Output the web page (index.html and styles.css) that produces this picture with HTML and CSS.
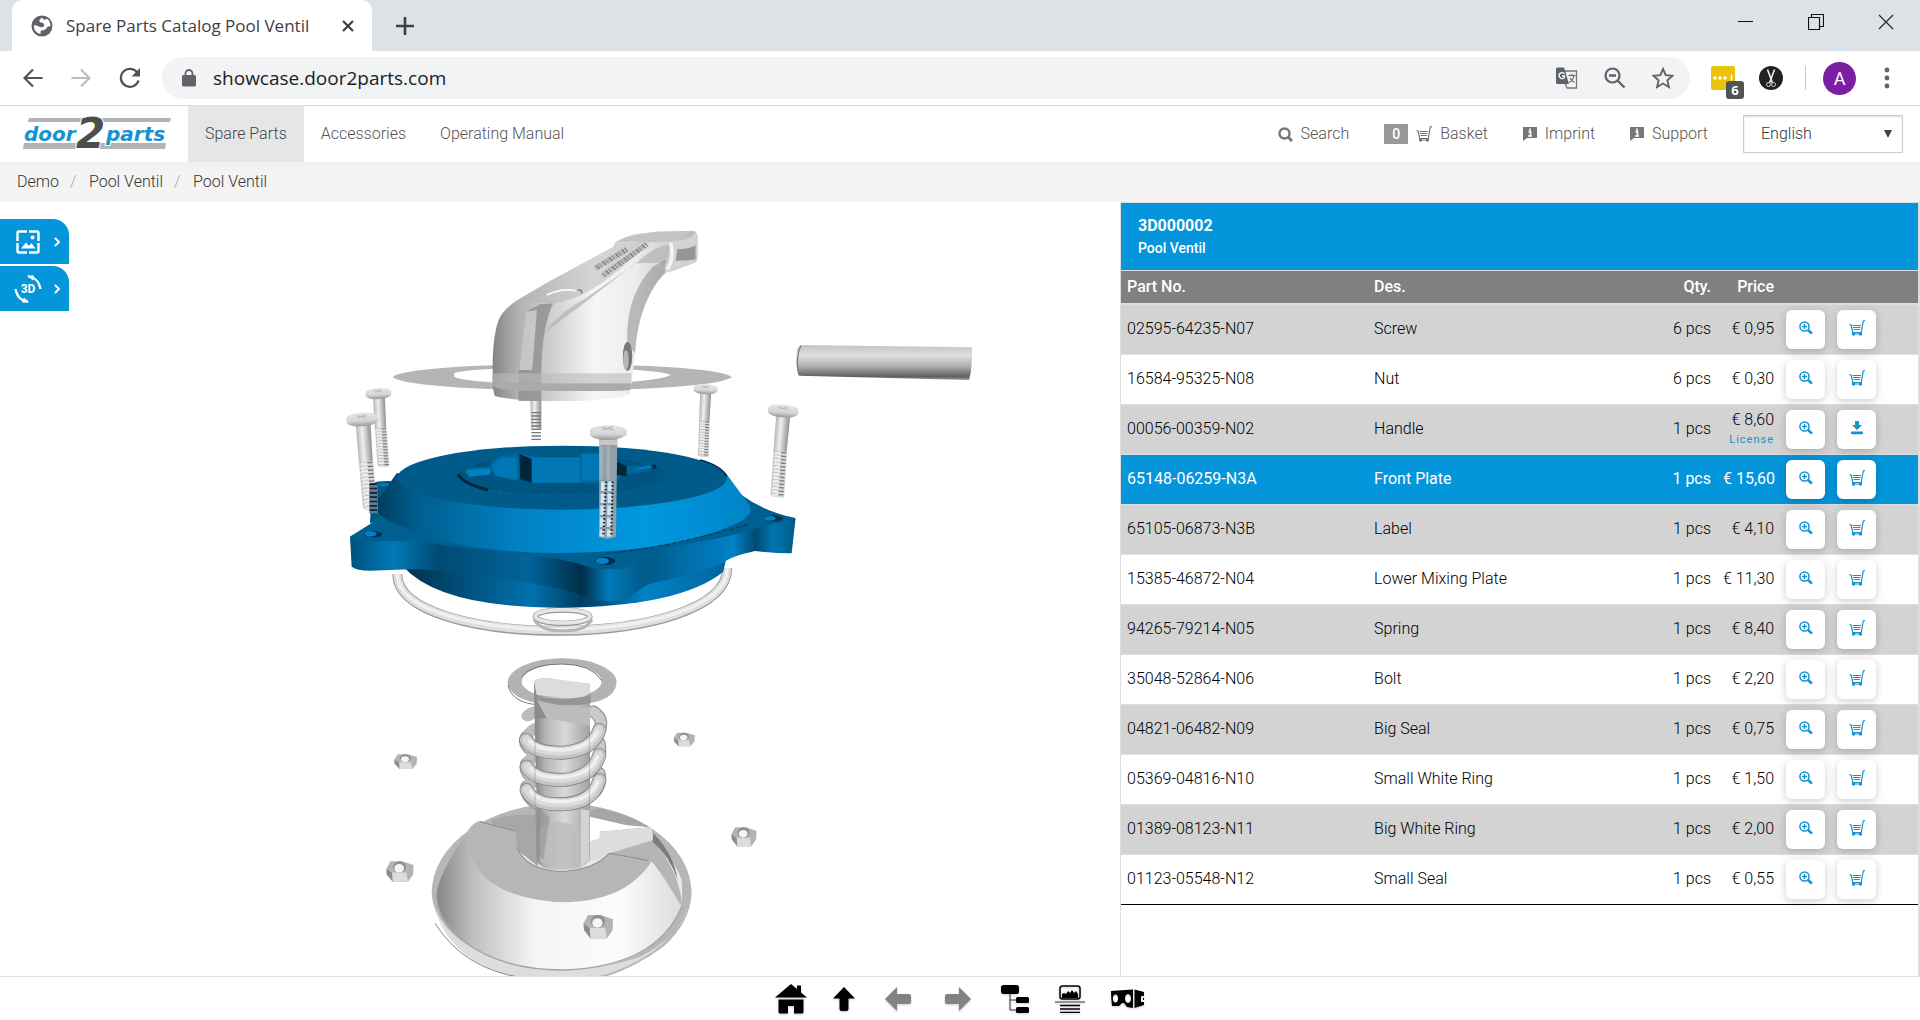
FILE: index.html
```html
<!DOCTYPE html>
<html lang="en">
<head>
<meta charset="utf-8">
<title>Spare Parts Catalog Pool Ventil</title>
<link rel="stylesheet" href="styles.css">
</head>
<body>
<svg width="0" height="0" class="defs" aria-hidden="true">
  <symbol id="i-zoom" viewBox="0 0 14 14"><circle cx="5.500" cy="5.500" r="4.600" fill="none" stroke="currentColor" stroke-width="1.500"/><path d="M3 5.500h5M5.500 3v5" stroke="currentColor" stroke-width="1.300"/><path d="M9 9l4 3.600" stroke="currentColor" stroke-width="2.600"/></symbol>
  <symbol id="i-cart" viewBox="0 0 16 16"><path d="M.5 4.500L2 5l1.800 7.500h8.400L14.300 1l1.700-.5" fill="none" stroke="currentColor" stroke-width="1.200"/><path d="M3.500 5.500h8.500M4 7.500h7.500M4.500 9.500h6.500" stroke="currentColor" stroke-width="1.100"/><circle cx="4.500" cy="14" r="1.700" fill="currentColor"/><circle cx="11.500" cy="14" r="1.700" fill="currentColor"/><path d="M4.500 14h7" stroke="currentColor"/></symbol>
  <symbol id="i-down" viewBox="0 0 14 14"><path d="M5 0h4v4h3L7 9 2 4h3z" fill="currentColor"/><rect x="1" y="10.500" width="12" height="2.800" rx="1" fill="currentColor"/></symbol>
  <symbol id="i-info" viewBox="0 0 14 14"><path d="M0 0h14v11H4L0 14z" fill="currentColor"/><path d="M7 1.500v2M5.500 4.700h2V9M5 9h4" stroke="#fff" stroke-width="1.700" fill="none"/></symbol>
</svg>

<header class="browser">
  <div class="tabstrip">
    <div class="tab">
      <svg class="favicon" viewBox="0 0 22 22"><circle cx="11" cy="11" r="10.500" fill="#5f6368"/><path d="M11.500 2.500c-2 1-3.500 2-3 4 .5 1.500 3.500.8 4.500 2.500.8 1.800-.6 3.500-3 3.300-2-.3-5-2.800-7-1.800-.8 4 2.800 7.800 6.500 8.500.4-1.500-.6-3 1-3.600 1.800-.3 4-.4 5-2.200.8-1.600 2.300-2 4-1.800 0-3-1-5.800-3-7.400-1.600 0-2.500.8-4 .2-.8-.5-1.200-1-1-1.700z" fill="#fff"/></svg>
      <span class="tab-title">Spare Parts Catalog Pool Ventil</span>
      <button class="plain" aria-label="Close tab"><svg width="12" height="12" viewBox="0 0 12 12"><path d="M1 1l10 10M11 1L1 11" stroke="#3c4043" stroke-width="2.200"/></svg></button>
    </div>
    <button class="plain newtab" aria-label="New tab"><svg width="18" height="18" viewBox="0 0 18 18"><path d="M9 0v18M0 9h18" stroke="#3c4043" stroke-width="2.600"/></svg></button>
    <div class="winctl">
      <button class="plain" aria-label="Minimize"><svg width="16" height="16" viewBox="0 0 16 16"><path d="M0 7.500h15" stroke="#111"/></svg></button>
      <button class="plain" aria-label="Restore"><svg width="16" height="16" viewBox="0 0 16 16"><path d="M.5 3.500h11v12H.5zM3.500 3.500V.5h12v12h-4" fill="none" stroke="#111" stroke-width="1.200"/></svg></button>
      <button class="plain" aria-label="Close"><svg width="16" height="16" viewBox="0 0 16 16"><path d="M1 1l14 14M15 1L1 15" stroke="#222" stroke-width="1.100"/></svg></button>
    </div>
  </div>
  <div class="toolbar">
    <button class="plain" aria-label="Back"><svg width="20" height="20" viewBox="0 0 20 20"><path d="M19.500 10H2M10 1.500L1.500 10l8.500 8.500" fill="none" stroke="#505357" stroke-width="2.200"/></svg></button>
    <button class="plain" aria-label="Forward"><svg width="20" height="20" viewBox="0 0 20 20"><path d="M.5 10H18M10 1.500l8.500 8.500-8.500 8.500" fill="none" stroke="#bbbcbf" stroke-width="2.200"/></svg></button>
    <button class="plain" aria-label="Reload"><svg width="22" height="22" viewBox="0 0 22 22"><path d="M18.500 6A9 9 0 1 0 19.500 13.500" fill="none" stroke="#505357" stroke-width="2.300"/><path d="M21 1v8.500h-8.500z" fill="#505357"/></svg></button>
    <div class="omnibox">
      <svg width="14" height="18" viewBox="0 0 14 18"><rect x="0" y="6" width="14" height="11.500" rx="1.500" fill="#5f6368"/><path d="M3.500 7V4.500a3.500 3.500 0 0 1 7 0V7" fill="none" stroke="#5f6368" stroke-width="1.800"/></svg>
      <input class="url" aria-label="Address" value="showcase.door2parts.com">
      <svg width="22" height="22" viewBox="0 0 22 22"><path d="M9 4h11.500v17H11L9 16z" fill="none" stroke="#777" stroke-width="1.300"/><path d="M0 2q0-1.500 1.500-1.500H8L13 17H1.500Q0 17 0 15.500z" fill="#5f6368"/><path d="M8.500 6.800a3 3 0 1 0 0 3.600V9H6" fill="none" stroke="#fff" stroke-width="1.400"/><path d="M12.500 8.500h7M16 7v1.500M18 8.500c-.5 3-2.500 5.500-5 7M14 11c1 2 2.500 3.500 4.500 4.500" fill="none" stroke="#777" stroke-width="1.300"/></svg>
      <svg width="22" height="22" viewBox="0 0 22 22"><circle cx="8.500" cy="8.500" r="7" fill="none" stroke="#5f6368" stroke-width="2.200"/><path d="M5 8.500h7M13.500 13.500l7 7" stroke="#5f6368" stroke-width="2.400"/></svg>
      <svg width="22" height="22" viewBox="0 0 22 22"><path d="M11 2l2.700 6.200 6.800.6-5.100 4.500 1.500 6.700-5.900-3.500L5.100 20l1.500-6.700-5.100-4.500 6.800-.6z" fill="none" stroke="#5f6368" stroke-width="1.900"/></svg>
    </div>
    <div class="extensions">
      <div class="ext"><svg width="26" height="25" viewBox="0 0 26 25"><rect width="24" height="24" rx="2" fill="#ecc30b"/><path d="M4 12h14" stroke="#fff" stroke-width="3.400" stroke-dasharray="0 5" stroke-linecap="round"/><path d="M20.500 8.500v6" stroke="#fff" stroke-width="1.600"/></svg><span class="ext-badge">6</span></div>
      <svg width="24" height="24" viewBox="0 0 24 24"><circle cx="12" cy="12" r="12" fill="#202124"/><path d="M8.500 3.500L13.500 17M15.500 3.500L10.500 17" stroke="#eee" stroke-width="1.600"/><circle cx="9.500" cy="18.500" r="2" fill="none" stroke="#ccc"/><circle cx="14.500" cy="18.500" r="2" fill="none" stroke="#ccc"/></svg>
      <span class="sep"></span>
      <span class="avatar">A</span>
      <button class="plain" aria-label="Menu"><svg width="6" height="22" viewBox="0 0 6 22"><circle cx="3" cy="3" r="2.400" fill="#5f6368"/><circle cx="3" cy="11" r="2.400" fill="#5f6368"/><circle cx="3" cy="19" r="2.400" fill="#5f6368"/></svg></button>
    </div>
  </div>
</header>

<nav class="nav">
  <a href="#" class="logo" aria-label="door2parts">
    <svg width="150" height="50" viewBox="0 -6 150 50">
      <path d="M6 2h142l-1 4H5zM1 27h142l-1 6H0z" fill="#b4b4b4"/>
      <text x="1" y="25" class="logo-word">door</text>
      <text x="83" y="25" class="logo-word">parts</text>
      <text x="53" y="32" class="logo-two">2</text>
    </svg>
  </a>
  <a href="#" class="nav-item active">Spare Parts</a>
  <a href="#" class="nav-item">Accessories</a>
  <a href="#" class="nav-item">Operating Manual</a>
  <div class="nav-right">
    <a href="#"><svg width="15" height="15" viewBox="0 0 15 15"><circle cx="6.500" cy="6.500" r="5" fill="none" stroke="#777" stroke-width="2.400"/><path d="M10 10l4 4" stroke="#777" stroke-width="2.800"/></svg>Search</a>
    <a href="#"><span class="count">0</span><svg width="16" height="16"><use href="#i-cart"/></svg>Basket</a>
    <a href="#"><svg width="14" height="14"><use href="#i-info"/></svg>Imprint</a>
    <a href="#"><svg width="14" height="14"><use href="#i-info"/></svg>Support</a>
    <div class="lang"><select aria-label="Language"><option>English</option></select><svg width="8" height="8" viewBox="0 0 8 8"><path d="M0 0h8L4 8z" fill="#444"/></svg></div>
  </div>
</nav>

<nav class="crumbs" aria-label="Breadcrumb">
  <a href="#">Demo</a><i>/</i><a href="#">Pool Ventil</a><i>/</i><a href="#">Pool Ventil</a>
</nav>

<main class="main">
  <section class="stage">
    <svg class="drawing" viewBox="0 202 1120 774" role="img" aria-label="Exploded view of the pool valve">
      <defs>
        <linearGradient id="gh"><stop offset="0" stop-color="#858585"/><stop offset=".12" stop-color="#b0b0b0"/><stop offset=".34" stop-color="#d9d9d9"/><stop offset=".5" stop-color="#f6f6f6"/><stop offset=".7" stop-color="#ececec"/><stop offset="1" stop-color="#b5b5b5"/></linearGradient>
        <linearGradient id="gpin" x2="0" y2="1"><stop offset="0" stop-color="#c4c4c4"/><stop offset=".3" stop-color="#dedede"/><stop offset=".6" stop-color="#b2b2b2"/><stop offset=".9" stop-color="#606060"/><stop offset="1" stop-color="#999"/></linearGradient>
        <linearGradient id="gs"><stop offset="0" stop-color="#b4b4b4"/><stop offset=".4" stop-color="#efefef"/><stop offset="1" stop-color="#8e8e8e"/></linearGradient>
        <linearGradient id="ghead" x2="0" y2="1"><stop offset="0" stop-color="#e6e6e6"/><stop offset=".6" stop-color="#d6d6d6"/><stop offset="1" stop-color="#999"/></linearGradient>
        <linearGradient id="gc"><stop offset="0" stop-color="#003d5e"/><stop offset=".12" stop-color="#005f92"/><stop offset=".4" stop-color="#0083c6"/><stop offset=".72" stop-color="#0098e0"/><stop offset="1" stop-color="#0084c8"/></linearGradient>
        <linearGradient id="gf"><stop offset="0" stop-color="#00527f"/><stop offset=".1" stop-color="#0079b6"/><stop offset=".2" stop-color="#004a73"/><stop offset=".4" stop-color="#00649a"/><stop offset=".52" stop-color="#002e48"/><stop offset=".58" stop-color="#007ab8"/><stop offset=".66" stop-color="#005a8a"/><stop offset=".86" stop-color="#0082c6"/><stop offset=".91" stop-color="#004a72"/><stop offset=".95" stop-color="#0075b2"/><stop offset="1" stop-color="#005a88"/></linearGradient>
        <linearGradient id="gb"><stop offset="0" stop-color="#00304c"/><stop offset=".4" stop-color="#0072ae"/><stop offset=".55" stop-color="#003e60"/><stop offset=".75" stop-color="#0082c6"/><stop offset="1" stop-color="#00669c"/></linearGradient>
        <linearGradient id="gd"><stop offset="0" stop-color="#858585"/><stop offset=".16" stop-color="#c2c2c2"/><stop offset=".4" stop-color="#f4f4f4"/><stop offset=".75" stop-color="#fcfcfc"/><stop offset="1" stop-color="#dcdcdc"/></linearGradient>
        <linearGradient id="gt"><stop offset="0" stop-color="#808080"/><stop offset=".2" stop-color="#b4b4b4"/><stop offset=".55" stop-color="#d9d9d9"/><stop offset="1" stop-color="#a2a2a2"/></linearGradient>
        <g id="screw">
          <path d="M-17 10h36l-1 98h-34z" fill="url(#gs)"/>
          <path d="M-16 106h35l3 118h-28l-8-6z" fill="#d6d6d6"/>
          <path d="M2 108l2 112" stroke="#6a6a6a" stroke-width="31" stroke-dasharray="3 6"/>
          <path d="M-4 108l2 112" stroke="#eee" stroke-width="17" stroke-dasharray="6 3"/>
          <path d="M-39-2q0-10 39-12 39 2 39 12v10q-8 8-25 11h-30q-18-3-23-11z" fill="url(#ghead)"/>
          <path d="M-14-7l24 5M10-8l-20 6" stroke="#bbb" stroke-width="3"/>
        </g>
        <g id="nut">
          <path d="M-34-4L-24-20H6L34-12 33 8 20 24H-18L-33 8z" fill="#b3b3b3"/>
          <path d="M-34-4L-20 4H16L20 24H-18L-33 8z" fill="#dcdcdc"/><path d="M-34-4L-20 4-18 24-33 8z" fill="#8b8b8b"/>
          <ellipse cx="-1" cy="-8" rx="16" ry="12" fill="#8e8e8e"/><ellipse cx="-2" cy="-5" rx="12" ry="9" fill="#f5f5f5"/>
        </g>
      </defs>

      <!-- handle, washer and pin -->
      <g transform="translate(380 210) scale(.3954 .3333)">
        <path fill-rule="evenodd" d="M32 501C80 450 840 450 890 501C840 554 80 554 32 501zM188 500C230 530 690 530 735 495C690 467 230 467 188 490z" fill="#b5b5b5"/>
        <path d="M380 560h28v100h-26z" fill="url(#gs)"/><path d="M395 606v90" stroke="#777" stroke-width="24" stroke-dasharray="4 6"/>
        <path d="M595 97Q615 80 640 72L700 65L795 63Q803 70 803 85V145Q802 155 795 158L740 183Q725 185 715 195Q680 240 660 320Q648 370 645 430L636 520L632 552Q600 568 500 573H400Q320 568 290 558L285 530V450Q287 370 300 330Q310 300 345 272L420 220L590 110z" fill="url(#gh)"/>
        <path d="M595 97Q620 75 700 65L795 63L735 93Q690 100 640 95z" fill="#c3c3c3"/>
        <path d="M590 110L595 97H680Q640 150 560 220Q500 270 440 280L345 272L420 220z" fill="#b4b4b4" opacity=".5"/>
        <path d="M415 370Q450 310 520 265L650 158Q690 110 735 103L725 160Q650 155 640 165Q570 230 510 285z" fill="#b8b8b8" opacity=".8"/>
        <path d="M735 95Q790 92 797 64L803 85V145L795 158L735 184L722 186Q742 150 735 95z" fill="#d3d3d3"/>
        <path d="M752 118q30 0 46-12v42q-10 4-50 4z" fill="#959595"/><path d="M735 98q10 45-8 80" stroke="#f4f4f4" stroke-width="9" fill="none"/>
        <path d="M720 190Q680 240 660 320Q648 370 645 430L625 400Q620 260 690 170L722 150z" fill="#858585" opacity=".5"/>
        <path d="M370 305L395 298L388 480H352z" fill="#c9c9c9" opacity=".8"/><path d="M370 305L405 283L438 280Q410 350 408 480V573H350V480H385L397 300z" fill="#8f8f8f" opacity=".8"/>
        <path d="M284 490H636L635 520H284z" fill="#bbb" opacity=".6"/><path d="M284 520H636L633 540Q600 545 408 542H350Q300 540 285 528z" fill="#aaa"/>
        <ellipse cx="626" cy="439" rx="12" ry="43" fill="#777"/><ellipse cx="622" cy="450" rx="7" ry="30" fill="#b7b7b7"/>
        <path d="M422 255q40-22 75-12" stroke="#fafafa" stroke-width="5" fill="none"/><path d="M500 240q12-2 10 10" stroke="#777" stroke-width="4" fill="none"/>
        <path d="M675 103L562 198M624 118L545 175" stroke="#666" stroke-width="15" stroke-dasharray="4 3 6 2 2 3" opacity=".65"/>
        <path d="M1064 405L1497 412Q1499 470 1490 510L1060 497Q1048 460 1055 415z" fill="url(#gpin)"/>
        <path d="M1064 407q-14 40-5 88" stroke="#777" stroke-width="3" fill="none"/>
      </g>

      <!-- front plate, screws and seals -->
      <g transform="translate(330 370) scale(.3333)">
        <path d="M202 612C200 842 1190 842 1192 595" stroke="#999" stroke-width="30" fill="none"/><path d="M202 612C200 840 1190 840 1192 595" stroke="#dedede" stroke-width="24" fill="none"/><path d="M202 612C200 836 1190 836 1192 595" stroke="#f0f0f0" stroke-width="10" fill="none"/>
        <g fill="none"><ellipse cx="698" cy="740" rx="82" ry="20" stroke="#999" stroke-width="16"/><ellipse cx="698" cy="739" rx="82" ry="20" stroke="#e6e6e6" stroke-width="11"/><path d="M612 748q20 36 86 34 70 2 88-34" stroke="#b4b4b4" stroke-width="9"/></g>
        <use href="#screw" transform="translate(145 68) rotate(-3)"/><use href="#screw" transform="translate(1127 55) scale(.92) rotate(3)"/>
        <path d="M125 340Q150 330 210 335L240 420L120 460z" fill="#005886"/><ellipse cx="162" cy="344" rx="17" ry="5" fill="#007bbb"/>
        <path d="M220 590Q330 712 690 713Q1050 710 1180 605L1190 560H215z" fill="url(#gb)"/>
        <path d="M60 500L125 460L200 370L1230 372Q1300 425 1397 445L1385 550Q1330 550 1275 543Q1200 560 1180 578Q1100 610 1000 632Q940 640 900 682Q850 700 780 688Q740 670 700 658Q560 630 450 618Q330 596 240 598L120 602Q80 602 65 590z" fill="url(#gf)"/>
        <path d="M60 500L125 460L200 370L1230 372Q1300 425 1397 445Q1330 465 1275 476Q1200 500 1100 517Q970 540 930 560Q900 592 870 597H815Q780 595 740 580Q660 558 500 545Q380 532 250 512Q150 514 80 512z" fill="#005f91"/>
        <path d="M200 310L140 395Q125 440 220 470Q400 550 690 549Q1060 545 1240 450Q1270 430 1258 405L1188 310z" fill="url(#gc)"/>
        <ellipse cx="697" cy="323" rx="495" ry="96" fill="#005b8b"/>
        <ellipse cx="697" cy="318" rx="310" ry="58" fill="#005580" stroke="#004d73" stroke-width="3"/>
        <path d="M385 310q20 64 312 66q290-4 310-65" fill="none" stroke="#006ca4" stroke-width="3" stroke-dasharray="12 5"/>
        <path d="M385 312q10 28 90 48" fill="none" stroke="#00263b" stroke-width="9"/>
        <path d="M405 295l75-5 5-20 30-12 50-6 60 8h120l10-12h55l60 30 25 10h65l-5 16-80 10-20 30-105-5H600l-30-12-75-20-90 5z" fill="#00659b"/>
        <path d="M600 262h150v76H600zM755 252h55v80h-55zM485 285l30-23 45 0v70l-65-15z" fill="#0076b4"/>
        <path d="M568 252l37 15v72l-35-12zM862 275l28 14v30l-30-4z" fill="#00263c"/><path d="M905 300l50-14 14 8M410 300l70-6v20l-65 6z" fill="#0080c0"/>
        <path d="M1110 270Q1170 285 1190 318" stroke="#002e48" stroke-width="5" fill="none"/>
        <g fill="#002f49"><ellipse cx="129" cy="493" rx="27" ry="9"/><ellipse cx="825" cy="573" rx="31" ry="12"/><ellipse cx="1330" cy="445" rx="28" ry="9"/><circle cx="973" cy="290" r="7"/></g>
        <g fill="#0082c6"><ellipse cx="122" cy="492" rx="18" ry="8"/><ellipse cx="817" cy="573" rx="20" ry="10"/><ellipse cx="1320" cy="445" rx="17" ry="7"/></g>
        <path d="M830 549Q960 545 1260 462" stroke="#003a58" stroke-width="3" stroke-dasharray="16 6" fill="none"/>
        <use href="#screw" transform="translate(97 145) scale(1.230) rotate(-4)"/>
        <path d="M118 340h25v90h-25z" fill="#5e7c8c"/><path d="M130 340v90" stroke="#123" stroke-width="22" stroke-dasharray="5 8"/>
        <use href="#screw" transform="translate(1360 120) scale(1.170) rotate(5)"/>
        <path d="M808 200h54l-4 300-25 8-26-8z" fill="#8fa0a9"/><path d="M808 195h54v30h-54z" fill="#c6c6c6"/><path d="M808 228h12l-3 100h-9zM830 228h10v100h-10z" fill="#a2b0b7"/><path d="M820 335l-5 165M840 335l-3 165" stroke="#cfe6f0" stroke-width="13" stroke-dasharray="28 8"/><path d="M848 335l-4 165M828 335l-8 165" stroke="#123" stroke-width="7" stroke-dasharray="4 7"/>
        <path d="M780 182Q780 168 835 165Q890 168 890 182V195Q870 208 850 210H815Q785 205 780 195z" fill="url(#ghead)"/><path d="M815 172l38 8M850 170l-32 10" stroke="#aaa" stroke-width="3"/>
      </g>

      <!-- base cone, spring, bolt and nuts -->
      <g transform="translate(380 640) scale(.3333)">
        <path d="M155 760A390 270 0 1 1 935 760Q930 850 850 920Q700 1030 545 1030Q380 1030 260 930Q160 850 155 760z" fill="#b6b6b6"/>
        <path d="M175 770A370 255 0 0 1 905 720Q910 780 900 800L540 900z" fill="#e9e9e9"/>
        <path d="M650 505Q750 520 820 570L780 600L600 610L620 520z" fill="#a6a6a6"/><path d="M630 530L740 556L810 562L660 575V600L620 615z" fill="#fff"/>
        <path d="M330 540Q400 520 470 525L475 680L400 620z" fill="#a7a7a7"/>
        <path d="M660 575L815 562L820 600L700 650L620 665L610 610L658 595z" fill="#ddd"/><path d="M820 600Q900 700 905 790L870 800L690 640z" fill="#b5b5b5"/><path d="M820 580Q880 640 893 720Q870 650 818 605z" fill="#7c7c7c"/>
        <path d="M255 590Q270 550 300 543L405 573L408 620Q440 690 545 695Q640 690 685 640L815 665Q840 690 905 800Q860 900 760 950Q650 995 540 990Q370 985 260 910Q180 850 168 770Q175 700 255 590z" fill="url(#gd)"/>
        <path d="M265 600Q270 550 300 543L405 573L412 620Q440 690 545 695Q640 690 685 640L815 665Q770 730 700 760Q600 800 480 780Q290 750 265 620z" fill="#b6b6b6"/>
        <path d="M160 790Q200 960 400 1010Q540 1040 690 1000Q880 930 925 800Q900 890 780 950Q550 1030 330 950Q190 890 160 790z" fill="#ddd"/>
        <path d="M170 760Q170 850 260 910Q370 990 550 990Q830 980 905 800" fill="none" stroke="#a5a5a5" stroke-width="4"/><path d="M165 850Q250 985 420 1012M300 545l105 28M412 625Q440 690 545 695Q640 690 690 640l115 22" fill="none" stroke="#888" stroke-width="3"/>
        <path fill-rule="evenodd" d="M383 128A163 73 0 1 1 710 128Q705 196 545 197Q390 190 383 128zM425 125A120 52 0 1 1 665 125A120 48 0 1 1 425 125z" fill="#b3b3b3"/>
        <path d="M384 135Q395 190 480 195M425 110q30-38 120-38t120 50" stroke="#777" stroke-width="3" fill="none"/>
        <path d="M424 232q0-24 40-34v38q-28 18-40-4z" fill="#bdbdbd"/>
        <g fill="none" stroke-linecap="round"><path d="M640 215Q680 240 650 285M440 290Q425 320 470 335M658 310Q665 345 650 365M440 370Q430 400 465 415M658 400Q665 430 645 455M440 440Q435 470 470 490" stroke="#999" stroke-width="38"/><path d="M640 215Q680 240 650 285M440 290Q425 320 470 335M658 310Q665 345 650 365M440 370Q430 400 465 415M658 400Q665 430 645 455M440 440Q435 470 470 490" stroke="#cacaca" stroke-width="30"/><path d="M440 292Q450 268 478 262M440 372Q450 350 478 345M440 445Q450 425 478 420" stroke="#bbb" stroke-width="34"/></g>
        <path d="M462 125Q470 113 505 115L630 132V660Q600 695 540 692Q480 690 470 660V500z" fill="url(#gt)"/>
        <path d="M462 125Q470 113 505 115L630 132V160Q600 180 580 176L470 165z" fill="#dcdcdc"/><path d="M462 168Q560 185 632 165V190Q550 205 462 190z" fill="#959595"/><path d="M465 180L500 235L630 258V200Q550 200 510 190z" fill="#bcbcbc"/><path d="M465 170L500 235H463z" fill="#8b8b8b"/>
        <path d="M480 560Q540 530 603 565V680Q540 700 480 665z" fill="#bdbdbd" opacity=".8"/><path d="M603 510h25v150l-25 20z" fill="#dcdcdc" opacity=".8"/><path d="M465 500L510 530Q500 580 490 660L470 640z" fill="#8d8d8d" opacity=".5"/>
        <g fill="none" stroke-linecap="round"><path d="M438 300Q460 340 550 338Q640 330 658 270M440 380Q460 420 550 420Q640 410 658 345M440 450Q460 495 545 493Q640 490 658 420" stroke="#808080" stroke-width="42"/><path d="M438 300Q460 340 550 338Q640 330 658 270M440 380Q460 420 550 420Q640 410 658 345M440 450Q460 495 545 493Q640 490 658 420" stroke="#c5c5c5" stroke-width="37"/><path d="M440 299Q465 336 550 334Q635 326 656 270M442 379Q465 416 550 416Q637 406 656 345M442 448Q465 491 545 489Q637 486 656 420" stroke="#dadada" stroke-width="25"/><path d="M450 304Q475 332 550 330Q630 322 652 275M452 386Q475 414 550 412Q635 402 652 350M452 455Q475 486 545 485Q635 482 652 425" stroke="#efefef" stroke-width="11"/></g>
        <path d="M465 260V500M628 260V500" stroke="#888" stroke-width="3" opacity=".5"/>
        <use href="#nut" transform="translate(77 363)"/><use href="#nut" transform="translate(913 297) scale(.92)"/><use href="#nut" transform="translate(1092 588) scale(1.100 1.300)"/><use href="#nut" transform="translate(60 692) scale(1.200 1.400)"/><use href="#nut" transform="translate(655 857) scale(1.300 1.600)"/>
      </g>
    </svg>
    <div class="side-tabs">
      <button aria-label="Image view"><svg width="24" height="24" viewBox="0 0 24 24"><path d="M1.500 11V3q0-1.500 1.500-1.500h8M13 1.500h8q1.500 0 1.500 1.500v8M22.500 13v8q0 1.500-1.500 1.500h-8M11 22.500H3Q1.500 22.500 1.500 21v-8" fill="none" stroke="#fff" stroke-width="2.400"/><path d="M5 18.500l5-6 3 3.500 2.500-3 4 5.500z" fill="#fff"/><circle cx="16.500" cy="7.500" r="2" fill="#fff"/></svg><svg width="7" height="10" viewBox="0 0 7 10"><path d="M1 1l4 4-4 4" fill="none" stroke="#fff" stroke-width="1.900"/></svg></button>
      <button aria-label="3D view"><svg width="28" height="28" viewBox="0 0 28 28"><path d="M14 1.500Q24.500 2.500 26.500 14M1.500 14Q3.500 25.500 14 26.500" fill="none" stroke="#fff" stroke-width="2.200"/><path d="M13 .5h7l-1 5zM15 27.500H8l2-5z" fill="#fff"/><text x="14" y="18" text-anchor="middle" class="three-d">3D</text></svg><svg width="7" height="10" viewBox="0 0 7 10"><path d="M1 1l4 4-4 4" fill="none" stroke="#fff" stroke-width="1.900"/></svg></button>
    </div>
  </section>

  <section class="panel">
    <header class="panel-head"><h1>3D000002</h1><p>Pool Ventil</p></header>
    <table class="parts">
      <colgroup><col class="c-part"><col><col class="c-qty"><col class="c-price"><col class="c-act"></colgroup>
      <thead><tr><th>Part No.</th><th>Des.</th><th class="num">Qty.</th><th class="num">Price</th><th></th></tr></thead>
      <tbody id="rows"></tbody>
    </table>
  </section>
</main>

<footer class="bottom">
  <button class="plain" aria-label="Home"><svg width="32" height="30" viewBox="0 0 32 30"><path d="M0 13.500L16 0l6 5V1.500h4V8.500L32 13.500z"/><path d="M3.500 15.500h25V28q0 1.500-1.500 1.500H19V22h-6v7.500H5q-1.500 0-1.500-1.500z"/></svg></button>
  <button class="plain" aria-label="Up"><svg width="22" height="24" viewBox="0 0 22 24"><path d="M11 0l11 11.500h-6.500V22q0 2-2 2h-5q-2 0-2-2V11.500H0z"/></svg></button>
  <button class="plain step" aria-label="Previous"><svg width="26" height="24" viewBox="0 0 26 24"><path d="M0 12L12 0v7h12q2 0 2 2v6q0 2-2 2H12v7z" fill="#828282"/></svg></button>
  <button class="plain step" aria-label="Next"><svg width="26" height="24" viewBox="0 0 26 24"><path d="M26 12L14 0v7H2Q0 7 0 9v6q0 2 2 2h12v7z" fill="#828282"/></svg></button>
  <button class="plain" aria-label="Structure"><svg width="28" height="28" viewBox="0 0 28 28"><rect width="18" height="9" rx="2.500"/><rect x="15" y="12" width="13" height="6" rx="1.500"/><rect x="15" y="22" width="13" height="6" rx="1.500"/><path d="M9 9v16h6M9 15h6" fill="none" stroke="#333"/></svg></button>
  <button class="plain" aria-label="Image and list"><svg width="30" height="28" viewBox="0 0 30 28"><rect x="5" y="1" width="20" height="13" rx="2.500" fill="none" stroke="#000" stroke-width="1.500"/><path d="M7 13V9l2-1 2 1 2-3 2 2 2-3 2 3 2-2 2 3v4z"/><path d="M0 17h30" stroke="#777" stroke-width="1.500"/><path d="M5 20.500h20M5 24h20M5 27.500h20" stroke="#000" stroke-width="1.500"/></svg></button>
  <button class="plain" aria-label="VR view"><svg width="34" height="20" viewBox="0 0 34 20"><path fill-rule="evenodd" d="M0 2L22 .5V19l-6-1-3-4h-2l-3 3H1Q0 10 0 2zM4.500 5.500c-3.500 0-3.500 8 0 8s3.500-8 0-8zM17 5c-4 0-4 9 0 9s4-9 0-9z"/><path fill-rule="evenodd" d="M23.500.5L33 3v13l-9.500 3zM30 7v6h3V11h-1V9h1V7z"/></svg></button>
</footer>
<script src="parts.js"></script>
</body>
</html>
```
FILE: parts.js
```js
const parts = [
  ["02595-64235-N07", "Screw", 6, "0,95"],
  ["16584-95325-N08", "Nut", 6, "0,30"],
  ["00056-00359-N02", "Handle", 1, "8,60", "license"],
  ["65148-06259-N3A", "Front Plate", 1, "15,60", "selected"],
  ["65105-06873-N3B", "Label", 1, "4,10"],
  ["15385-46872-N04", "Lower Mixing Plate", 1, "11,30"],
  ["94265-79214-N05", "Spring", 1, "8,40"],
  ["35048-52864-N06", "Bolt", 1, "2,20"],
  ["04821-06482-N09", "Big Seal", 1, "0,75"],
  ["05369-04816-N10", "Small White Ring", 1, "1,50"],
  ["01389-08123-N11", "Big White Ring", 1, "2,00"],
  ["01123-05548-N12", "Small Seal", 1, "0,55"]
];

document.getElementById("rows").innerHTML = parts.map(([no, name, qty, price, flag]) => {
  const licensed = flag === "license";
  const icon = licensed ? "i-down" : "i-cart";
  const size = licensed ? 14 : 16;
  return `<tr class="${flag || ""}">
    <td>${no}</td><td>${name}</td><td class="num">${qty} pcs</td>
    <td class="num">€ ${price}${licensed ? '<a href="#" class="license-link">License</a>' : ""}</td>
    <td><div class="actions">
      <button aria-label="Zoom to ${name}"><svg width="14" height="14"><use href="#i-zoom"/></svg></button>
      <button aria-label="${licensed ? "Download" : "Add to basket"}: ${name}"><svg width="${size}" height="${size}"><use href="#${icon}"/></svg></button>
    </div></td></tr>`;
}).join("");
```
FILE: styles.css
```css
* { box-sizing: border-box; }
body { margin: 0; min-height: 100vh; display: flex; flex-direction: column; background: #fff; color: #000; font: 300 16px/20px Roboto, "Liberation Sans", sans-serif; }
a { color: inherit; text-decoration: none; }
svg { display: block; flex: none; }
.defs { position: absolute; }
.plain { padding: 0; border: 0; background: none; display: block; }

.tabstrip { display: flex; align-items: center; height: 51px; padding-left: 12px; background: #dee1e6; font: 400 17px/22px "Open Sans", sans-serif; }
.tab { display: flex; align-items: center; width: 360px; height: 51px; padding: 0 18px 0 19px; background: #fff; border-radius: 10px 10px 0 0; }
.favicon { width: 22px; height: 22px; }
.tab-title { flex: 1; padding-left: 13px; color: #3c4043; white-space: nowrap; }
.newtab { margin-left: 24px; }
.winctl { display: flex; gap: 54px; margin-left: auto; padding: 0 26px 8px 0; }

.toolbar { display: flex; align-items: center; height: 55px; padding: 0 30px 0 23px; gap: 28px; border-bottom: 1px solid #dcdcdc; }
.omnibox { flex: 1; display: flex; align-items: center; gap: 26px; height: 42px; margin-left: -7px; padding: 0 16px 0 20px; border-radius: 21px; background: #f1f3f4; }
.url { flex: 1; min-width: 0; margin-left: -9px; padding: 0; border: 0; background: none; color: #202124; font: 400 19px/24px "Open Sans", sans-serif; }
.extensions { display: flex; align-items: center; gap: 22px; margin-left: -7px; }
.ext { position: relative; }
.ext-badge { position: absolute; left: 15px; top: 15px; width: 18px; height: 18px; border-radius: 3px; background: #505357; color: #fff; font: bold 13px/18px "Open Sans", sans-serif; text-align: center; }
.sep { width: 1px; height: 24px; background: #ccc; }
.avatar { width: 33px; height: 33px; margin: 0 6px 0 -5px; border-radius: 50%; background: #7b1fa2; color: #fff; font-size: 18px; font-weight: 400; line-height: 33px; text-align: center; }

.nav { display: flex; align-items: stretch; height: 56px; color: #555; }
.logo { width: 188px; padding: 4px 0 0 23px; }
.logo-word { font: italic bold 20px "DejaVu Sans", sans-serif; fill: #1592d0; stroke: #fff; stroke-width: 2px; paint-order: stroke; }
.logo-two { font: italic bold 42px "DejaVu Sans", sans-serif; fill: #4d4d4d; stroke: #fff; stroke-width: 2px; paint-order: stroke; }
.nav-item { padding: 0 17px; line-height: 55px; }
.nav-item.active { background: #e6e6e6; color: #444; }
.nav-right { display: flex; align-items: center; gap: 35px; margin-left: auto; padding-right: 17px; }
.nav-right a { display: flex; align-items: center; gap: 8px; }
.nav-right svg { color: #777; }
.count { width: 24px; height: 20px; background: #999; color: #fff; font-weight: 500; font-size: 14px; text-align: center; }
.lang { display: flex; align-items: center; width: 160px; height: 38px; padding: 0 10px 0 17px; border: 1px solid #ccc; box-shadow: inset 0 1px 2px #ddd; }
.lang select { flex: 1; min-width: 0; appearance: none; border: 0; padding: 0; background: none; color: #333; font: inherit; }

.crumbs { display: flex; height: 40px; padding: 0 17px; background: linear-gradient(#f0f0f0, #f4f4f4 12px); line-height: 40px; color: #333; }
.crumbs i { width: 30px; padding-left: 11px; color: #aaa; font-style: normal; }

.main { flex: 1; display: grid; grid-template-columns: 7fr 5fr; }
.stage { position: relative; }
.drawing { width: 100%; height: auto; }
.side-tabs { position: absolute; left: 0; top: 17px; display: grid; gap: 2px; }
.side-tabs button { display: grid; grid-template-columns: 36px 1fr; align-items: center; width: 69px; height: 45px; padding: 0 0 0 10px; border: 0; border-radius: 0 16px 0 0; background: #0595db; }
.side-tabs svg { justify-self: center; }
.three-d { font: bold 12px Roboto, sans-serif; fill: #fff; }

.panel { border: solid #ddd; border-width: 1px 2px 0 1px; }
.panel-head { height: 68px; padding: 13px 17px; border-bottom: 1px solid #ddd; background: #0595db; color: #fff; }
.panel-head h1 { margin: 0; font-size: 16px; line-height: 20px; font-weight: 700; }
.panel-head p { margin: 2px 0 0; font-size: 14px; line-height: 20px; font-weight: 500; }
.parts { width: 100%; table-layout: fixed; border-collapse: separate; border-spacing: 0; }
.c-part { width: 31%; }
.c-qty { width: 61px; }
.c-price { width: 63px; }
.c-act { width: 138px; }
.parts th, .parts td { padding: 0 6px; text-align: left; white-space: nowrap; }
.parts th { height: 34px; border-bottom: 2px solid #ddd; background: #808080; color: #fff; font-weight: 500; }
.parts td { height: 50px; padding-bottom: 1px; border-bottom: 1px solid #ddd; }
.parts .num { text-align: right; }
.parts tr:nth-child(odd) td { background: #d3d3d3; }
.parts .selected td { background: #0595db; color: #fff; font-weight: 400; }
.parts tr:last-child td { border-bottom-color: #000; }
.license-link { display: block; margin-top: 2px; color: #1592d0; font-size: 11px; font-weight: 400; line-height: 16px; letter-spacing: 1px; }
.parts td:last-child { padding-bottom: 0; }
.actions { display: flex; gap: 12px; }
.actions button { display: grid; place-items: center; width: 39px; height: 39px; padding: 0 0 3px; border: 0; border-radius: 6px; background: #fff; color: #1592d0; box-shadow: 0 2px 8px rgba(0, 0, 0, .2); }

.bottom { display: flex; justify-content: center; align-items: center; gap: 26px; height: 44px; border-top: 1px solid #ddd; }
.bottom .step { padding: 0 4px; }
.bottom svg { filter: drop-shadow(0 1px 1px rgba(0, 0, 0, .2)); }
```
